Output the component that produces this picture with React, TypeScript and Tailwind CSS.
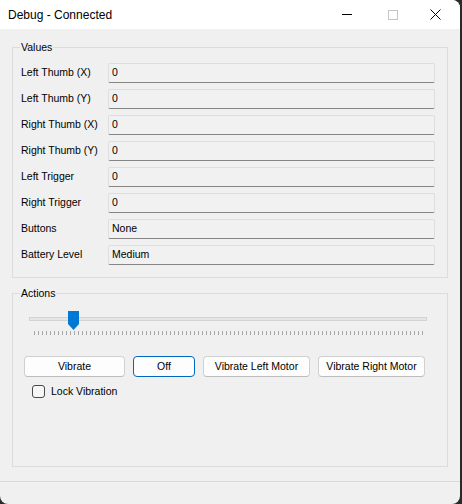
import React from "react";

const rows: [string, string][] = [
  ["Left Thumb (X)", "0"],
  ["Left Thumb (Y)", "0"],
  ["Right Thumb (X)", "0"],
  ["Right Thumb (Y)", "0"],
  ["Left Trigger", "0"],
  ["Right Trigger", "0"],
  ["Buttons", "None"],
  ["Battery Level", "Medium"],
];

function GroupBox({ title, className, children }: { title: string; className?: string; children: React.ReactNode }) {
  return (
    <div className={"relative border border-[#dcdcdc] " + (className ?? "")}>
      <span className="absolute -top-[7px] left-[7px] bg-[#f0f0f0] px-[1px] leading-[13px]">{title}</span>
      {children}
    </div>
  );
}

function Slider() {
  const ticks = Array.from({ length: 98 }, (_, i) => i);
  return (
    <svg width="399" height="26" viewBox="0 0 399 26" className="block">
      <rect x="0.5" y="7.5" width="397" height="3" fill="#e6e6e6" stroke="#d3d3d3" />
      {ticks.map((i) => (
        <rect key={i} x={5 + i * 4} y="21" width="1" height="4" fill="#a8a8a8" />
      ))}
      <path d="M39 1 H50 V14 L44.5 20 L39 14 Z" fill="#0078d4" />
    </svg>
  );
}

function Button({ label, width, focused }: { label: string; width: string; focused?: boolean }) {
  return (
    <div
      className={
        "h-[21px] flex items-center justify-center rounded-[4px] border " +
        width +
        (focused ? " border-[#0067c0] bg-[#fdfdfd]" : " border-[#d0d0d0] border-b-[#bcbcbc] bg-[#fdfdfd]")
      }
    >
      {label}
    </div>
  );
}

export default function App() {
  return (
    <div className="min-h-screen bg-[#2a2a2a]">
      <div
        className="w-[460px] h-[504px] bg-[#f0f0f0] rounded-b-[8px] rounded-tr-[8px] overflow-hidden flex flex-col text-[10.5px] text-black"
        style={{ fontFamily: '"Liberation Sans", Arial, sans-serif' }}
      >
        {/* Title bar */}
        <div className="h-[29px] bg-white flex items-center shrink-0">
          <span className="pl-[8px] text-[12px]">Debug - Connected</span>
          <div className="ml-auto flex items-center h-full">
            <div className="w-[46px] flex justify-center">
              <svg width="10" height="10" viewBox="0 0 10 10">
                <rect x="0" y="4" width="10" height="1" fill="#000" />
              </svg>
            </div>
            <div className="w-[46px] flex justify-center">
              <svg width="10" height="10" viewBox="0 0 10 10">
                <rect x="0.5" y="0.5" width="9" height="9" fill="none" stroke="#c4c4c4" />
              </svg>
            </div>
            <div className="w-[44px] flex justify-center pr-[6px]">
              <svg width="11" height="11" viewBox="0 0 11 11">
                <path d="M0.5 0.5 L10.5 10.5 M10.5 0.5 L0.5 10.5" stroke="#000" strokeWidth="1" />
              </svg>
            </div>
          </div>
        </div>

        <div className="flex-1 flex flex-col px-[12px]">
          {/* Values */}
          <GroupBox title="Values" className="mt-[18px] h-[231px] pt-[15px] pl-[8px] pr-[12px]">
            <div className="flex flex-col gap-[6px]">
              {rows.map(([label, value]) => (
                <div key={label} className="flex items-center h-[20px]">
                  <span className="w-[87px] shrink-0">{label}</span>
                  <div className="flex-1 h-[20px] flex items-center pl-[3px] rounded-[2px] border border-[#dedede] border-b-[#858585] bg-[#f1f1f1]">
                    {value}
                  </div>
                </div>
              ))}
            </div>
          </GroupBox>

          {/* Actions */}
          <GroupBox title="Actions" className="mt-[15px] h-[174px] pt-[16px]">
            <div className="pl-[16px]">
              <Slider />
            </div>
            <div className="flex gap-[8px] pl-[11px] mt-[20px]">
              <Button label="Vibrate" width="w-[101px]" />
              <Button label="Off" width="w-[62px]" focused />
              <Button label="Vibrate Left Motor" width="w-[107px]" />
              <Button label="Vibrate Right Motor" width="w-[107px]" />
            </div>
            <div className="flex items-center gap-[6px] pl-[19px] mt-[7px]">
              <div className="w-[13px] h-[13px] rounded-[3px] border border-[#4a4a4a] bg-[#f6f6f6]" />
              <span>Lock Vibration</span>
            </div>
          </GroupBox>
        </div>

        <div className="h-[1px] bg-[#d9d9d9] mb-[22px]" />
      </div>
    </div>
  );
}
